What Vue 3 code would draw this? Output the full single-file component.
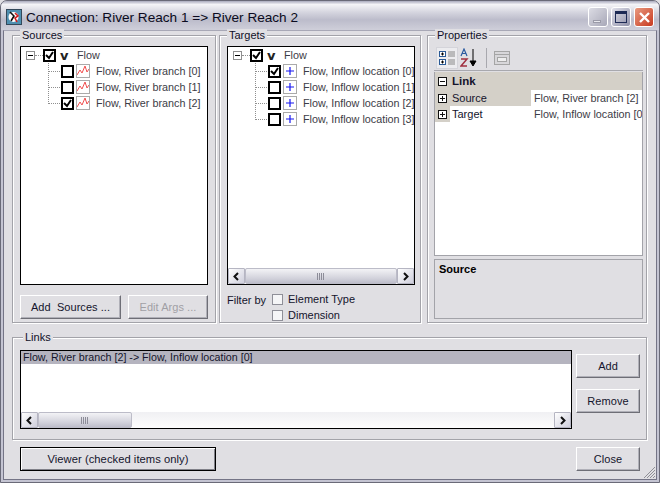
<script setup>
const sources = [
  { label: 'Flow, River branch [0]', checked: false },
  { label: 'Flow, River branch [1]', checked: false },
  { label: 'Flow, River branch [2]', checked: true }
]
const targets = [
  { label: 'Flow, Inflow location [0]', checked: true },
  { label: 'Flow, Inflow location [1]', checked: false },
  { label: 'Flow, Inflow location [2]', checked: false },
  { label: 'Flow, Inflow location [3]', checked: false }
]
</script>

<template>
  <div class="win">
    <div class="title">
      <svg class="appicon" width="16" height="16" viewBox="0 0 16 16">
        <rect x="0.5" y="0.5" width="15" height="15" fill="#4f8fb0" stroke="#33485a"/>
        <circle cx="7.500" cy="8" r="5" fill="#fff"/>
        <path d="M4 3l4 4-3 5" stroke="#111" stroke-width="1.600" fill="none"/>
        <path d="M9 4l3 3-3 2 2 4" stroke="#d02020" stroke-width="1.600" fill="none"/>
      </svg>
      <span class="title-text">Connection: River Reach 1 =&gt; River Reach 2</span>
      <div class="wbtns">
        <div class="wb min"><i></i></div>
        <div class="wb max"><i></i></div>
        <div class="wb close">
          <svg width="13" height="13" viewBox="0 0 13 13"><path d="M2 2l9 9M11 2l-9 9" stroke="#fff" stroke-width="2.400"/></svg>
        </div>
      </div>
    </div>

    <div class="client">
      <div class="top">
        <section class="group g-src">
          <span class="legend">Sources</span>
          <div class="tree src-tree">
            <div class="row root">
              <span class="exp"><i></i></span><span class="dots"></span>
              <span class="chk on"><svg width="9" height="9" viewBox="0 0 9 9"><path d="M1 4l3 3 4-6" fill="none" stroke="#000" stroke-width="2"/></svg></span>
              <b class="vee">v</b><span class="lab">Flow</span>
            </div>
            <div class="kids">
              <div v-for="s in sources" :key="s.label" class="row kid">
                <span class="chk"><svg v-if="s.checked" width="9" height="9" viewBox="0 0 9 9"><path d="M1 4l3 3 4-6" fill="none" stroke="#000" stroke-width="2"/></svg></span>
                <span class="ico"><svg width="12" height="12" viewBox="0 0 12 12"><path d="M0 10l3-5 2 3 3-7 2 6 2-3" fill="none" stroke="#f05050"/></svg></span>
                <span class="lab">{{ s.label }}</span>
              </div>
            </div>
          </div>
          <div class="src-btns">
            <button class="btn add-src">Add&nbsp; Sources ...</button>
            <button class="btn edit" disabled>Edit Args ...</button>
          </div>
        </section>

        <section class="group g-tgt">
          <span class="legend">Targets</span>
          <div class="tree tgt-tree">
            <div class="tree-body">
              <div class="row root">
                <span class="exp"><i></i></span><span class="dots"></span>
                <span class="chk on"><svg width="9" height="9" viewBox="0 0 9 9"><path d="M1 4l3 3 4-6" fill="none" stroke="#000" stroke-width="2"/></svg></span>
                <b class="vee">v</b><span class="lab">Flow</span>
              </div>
              <div class="kids">
                <div v-for="t in targets" :key="t.label" class="row kid">
                  <span class="chk"><svg v-if="t.checked" width="9" height="9" viewBox="0 0 9 9"><path d="M1 4l3 3 4-6" fill="none" stroke="#000" stroke-width="2"/></svg></span>
                  <span class="ico"><svg width="12" height="12" viewBox="0 0 12 12"><path d="M6 2v8M2 6h8" stroke="#1515f0" stroke-width="1.200"/></svg></span>
                  <span class="lab">{{ t.label }}</span>
                </div>
              </div>
            </div>
            <div class="hscroll">
              <span class="sb-btn"><svg width="9" height="9" viewBox="0 0 9 9"><path d="M6 1L2.500 4.500 6 8" fill="none" stroke="#111" stroke-width="2"/></svg></span>
              <span class="thumb full"><em></em></span>
              <span class="sb-btn"><svg width="9" height="9" viewBox="0 0 9 9"><path d="M3 1l3.500 3.500L3 8" fill="none" stroke="#111" stroke-width="2"/></svg></span>
            </div>
          </div>
          <div class="filter">
            <span class="f-lab">Filter by</span>
            <div class="f-opts">
              <label class="f-opt"><span class="box"></span>Element Type</label>
              <label class="f-opt"><span class="box"></span>Dimension</label>
            </div>
          </div>
        </section>

        <section class="group g-prop">
          <span class="legend">Properties</span>
          <div class="toolbar">
            <span class="tb active">
              <svg width="18" height="18" viewBox="0 0 18 18">
                <rect x="1.500" y="2.500" width="6" height="5" fill="#fff" stroke="#2a5a96"/>
                <rect x="1.500" y="10.500" width="6" height="5" fill="#fff" stroke="#2a5a96"/>
                <path d="M3 5h3M4.500 3.500v3M3 13h3M4.500 11.500v3" stroke="#000"/>
                <path d="M10 3h7M10 5h7M10 7h7M10 11h7M10 13h7M10 15h7" stroke="#888"/>
              </svg>
            </span>
            <span class="tb az">
              <svg width="18" height="20" viewBox="0 0 18 20">
                <path d="M1 8l3-7 3 7M2.500 5.500h3" fill="none" stroke="#2a5aa0" stroke-width="1.200"/>
                <path d="M1 11h6L1 18h6" fill="none" stroke="#a03040" stroke-width="1.500"/>
                <path d="M13 1v15M10 13l3 5 3-5z" stroke="#000" fill="#000"/>
              </svg>
            </span>
            <span class="sep"></span>
            <span class="tb dis">
              <svg width="16" height="14" viewBox="0 0 16 14">
                <rect x="0.500" y="0.500" width="15" height="13" fill="#d8d7da" stroke="#a5a5a5"/>
                <path d="M0.500 3.500h15" stroke="#a5a5a5"/>
                <rect x="3.500" y="6.500" width="9" height="4" fill="#eee" stroke="#a5a5a5"/>
              </svg>
            </span>
          </div>
          <div class="grid">
            <div class="g-row cat"><span class="gexp"><i></i></span><b>Link</b></div>
            <div class="g-row sel">
              <span class="gexp plus"><i></i></span>
              <span class="gname">Source</span>
              <span class="gval">Flow, River branch [2]</span>
            </div>
            <div class="g-row">
              <span class="gexp plus"><i></i></span>
              <span class="gname">Target</span>
              <span class="gval">Flow, Inflow location [0]</span>
            </div>
          </div>
          <div class="help"><b>Source</b></div>
        </section>
      </div>

      <section class="group g-links">
        <span class="legend">Links</span>
        <div class="links-in">
          <div class="list">
            <div class="list-body"><div class="list-sel">Flow, River branch [2] -&gt; Flow, Inflow location [0]</div></div>
            <div class="hscroll">
              <span class="sb-btn"><svg width="9" height="9" viewBox="0 0 9 9"><path d="M6 1L2.500 4.500 6 8" fill="none" stroke="#111" stroke-width="2"/></svg></span>
              <span class="thumb short"><em></em></span>
              <span class="track"></span>
              <span class="sb-btn"><svg width="9" height="9" viewBox="0 0 9 9"><path d="M3 1l3.500 3.500L3 8" fill="none" stroke="#111" stroke-width="2"/></svg></span>
            </div>
          </div>
          <div class="link-btns">
            <button class="btn side">Add</button>
            <button class="btn side">Remove</button>
          </div>
        </div>
      </section>

      <div class="bottom">
        <button class="btn viewer">Viewer (checked items only)</button>
        <button class="btn side">Close</button>
      </div>
      <svg class="grip" width="13" height="13" viewBox="0 0 13 13"><path d="M12 1L1 12M12 4l-8 8M12 7l-5 5M12 10l-2 2" stroke="#8f8f96"/></svg>
    </div>
  </div>
</template>

<style>
html, body { margin: 0; background: #e0dfe3; }
</style>

<style scoped>
* { box-sizing: border-box; }
.win {
  width: 660px; height: 483px; overflow: hidden; position: relative;
  font: 11px/13px "Liberation Sans", Arial, sans-serif; color: #000;
  background: #c4c4d2;
  border: 1px solid #6a6a78; border-radius: 7px 7px 0 0;
  display: flex; flex-direction: column;
  padding: 0 1px 1px;
}
.title {
  height: 29px; flex: none; display: flex; align-items: center; padding: 3px 5px 0 5px;
  margin: 0 -1px;
  background: linear-gradient(#a9aabd 0, #f4f4f7 12%, #d4d4de 40%, #bcbccb 65%, #cfcfda 100%);
}
.appicon { flex: none; }
.title-text { margin-left: 4px; font-size: 13.6px; color: #0b0b20; white-space: nowrap; }
.wbtns { margin-left: auto; display: flex; gap: 3px; }
.wb { width: 20px; height: 20px; border: 1px solid #fff; border-radius: 3px; display: flex; align-items: center; justify-content: center; position: relative; }
.min { background: linear-gradient(135deg, #dcdce4, #a8a8b8); }
.min i { position: absolute; left: 4px; bottom: 3px; width: 8px; height: 3px; background: #e8e8ee; border: 1px solid #9a9aa8; }
.max { background: linear-gradient(135deg, #e0e0ea, #8f90a8); }
.max i { width: 12px; height: 12px; border: 1px solid #1d2a55; border-top-width: 3px; }
.close { background: linear-gradient(135deg, #e89a80, #c8391f); }
.client {
  flex: 1; padding: 4px 8px 8px 8px; display: flex; flex-direction: column; position: relative;
  background: #e0dfe3;
  margin: 0 1px 1px;
  border: 1px solid #747486; border-top: 1px solid #a8a8b6;
}
.top { display: flex; height: 288px; flex: none; }
.group { position: relative; border: 1px solid #a3a3a9; box-shadow: 1px 1px 0 #fff, inset 1px 1px 0 #fff; flex: none; }
.legend { position: absolute; top: -7px; left: 7px; padding: 0 2px; background: #e0dfe3; color: #101028; }
.g-src { width: 204px; padding: 10px 7px 0; margin-right: 3px; }
.g-tgt { width: 202px; padding: 10px 6px 0 7px; margin-right: 6px; }
.g-prop { width: 220px; padding: 10px 3px 0 6px; }
.tree { width: 188px; height: 239px; background: #fff; border: 1px solid #000; position: relative; overflow: hidden; font-size: 10.8px; }
.tgt-tree { display: flex; flex-direction: column; }
.tree-body { flex: 1; overflow: hidden; }
.row { display: flex; align-items: center; height: 16px; white-space: nowrap; }
.root { padding-left: 5px; }
.exp { width: 9px; height: 9px; border: 1px solid #8f8f8f; position: relative; flex: none; background: #fff; }
.exp i { position: absolute; left: 1px; top: 3px; width: 5px; height: 1px; background: #000; }
.dots { width: 8px; border-top: 1px dotted #8f8f8f; flex: none; }
.chk { width: 13px; height: 13px; border: 2px solid #000; background: #fff; display: flex; align-items: center; justify-content: center; flex: none; }
.vee { margin-left: 4px; width: 17px; font: bold 13px/13px "DejaVu Sans", sans-serif; color: #222; }
.lab { color: #3c3c46; }
.kids { margin-left: 27px; border-left: 1px dotted #8f8f8f; height: 41px; }
.tgt-tree .kids { height: 57px; }
.kid { position: relative; padding-left: 12px; }
.kid::before { content: ""; position: absolute; left: 0; top: 8px; width: 11px; border-top: 1px dotted #8f8f8f; }
.ico { width: 14px; height: 14px; margin-left: 2px; border: 1px solid #aaa; display: flex; align-items: center; justify-content: center; flex: none; margin-right: 6px; background: #fff; }
.src-btns { display: flex; gap: 7px; margin-top: 10px; }
.btn {
  font: 11px/13px "Liberation Sans", Arial, sans-serif; letter-spacing: .05px; color: #14142c; background: #e0dfe3; height: 24px; padding: 0;
  border: 1px solid; border-color: #fff #6e6e76 #6e6e76 #fff; box-shadow: inset -1px -1px 0 #b0b0b8;
}
.add-src { width: 101px; }
.edit { width: 80px; color: #a0a0a5; }
.hscroll { height: 16px; display: flex; background: linear-gradient(#f0f0f3, #fdfdfd); flex: none; }
.sb-btn { width: 17px; height: 16px; flex: none; display: flex; align-items: center; justify-content: center; border: 1px solid #b5b5c2; border-radius: 1px; background: linear-gradient(135deg, #fff, #cfcfdc); }
.thumb { display: flex; align-items: center; justify-content: center; border: 1px solid #bcbcc8; border-radius: 2px; background: linear-gradient(#f3f3f6, #d0d0da 70%, #bdbdca); }
.thumb em { width: 8px; height: 7px; background: repeating-linear-gradient(90deg, #8c8c98 0 1px, transparent 1px 2px); }
.full { flex: 1; }
.short { width: 94px; }
.track { flex: 1; }
.filter { display: flex; margin-top: 6px; }
.f-lab { width: 45px; padding-top: 3px; color: #14142c; }
.f-opt { display: flex; align-items: center; height: 16px; color: #14142c; }
.box { width: 11px; height: 11px; background: #f5f5f7; border: 1px solid #8f8f98; margin-right: 5px; }
.toolbar { display: flex; align-items: center; height: 25px; padding-left: 2px; border-bottom: 1px solid #a8a8ae; margin-bottom: 1px; }
.tb { display: flex; align-items: center; justify-content: center; width: 22px; height: 22px; }
.active { background: #ececef; box-shadow: inset 0 0 0 1px #d4d4da; }
.sep { width: 1px; height: 20px; background: #a8a8ae; margin: 0 4px 0 6px; }
.grid { width: 209px; height: 184px; background: #fff; border: 1px solid #a3a3a9; border-top: 0; overflow: hidden; color: #14142c; }
.g-row { height: 16px; display: flex; align-items: center; white-space: nowrap; }
.gexp { width: 15px; height: 100%; display: flex; align-items: center; justify-content: center; background: #d4d0c8; flex: none; }
.gexp i { width: 9px; height: 9px; border: 1px solid #111; background: linear-gradient(#111,#111) center/5px 1px no-repeat, #fff; }
.plus i { background: linear-gradient(#111,#111) center/5px 1px no-repeat, linear-gradient(#111,#111) center/1px 5px no-repeat, #fff; }
.cat { height: 18px; background: #d4d0c8; font-weight: bold; }
.cat b { padding-left: 2px; font-size: 11.5px; }
.gname { width: 81px; height: 100%; padding-left: 2px; display: flex; align-items: center; flex: none; }
.sel .gname { background: #d4d0c8; }
.gval { padding-left: 3px; flex: 1; height: 100%; display: flex; align-items: center; overflow: hidden; color: #3c3c46; font-size: 10.8px; }
.help { width: 209px; height: 60px; margin-top: 3px; border: 1px solid #a3a3a9; padding: 3px 4px; }
.g-links { margin-top: 14px; height: 103px; width: 635px; padding: 12px 7px 0; }
.g-links .legend { left: 10px; }
.links-in { display: flex; }
.list { width: 552px; height: 79px; background: #fff; border: 1px solid #000; display: flex; flex-direction: column; flex: none; font-size: 10.7px; }
.list-body { flex: 1; }
.list-sel { height: 13px; line-height: 13px; background: #b5b4bf; padding-left: 2px; color: #14142c; }
.link-btns { display: flex; flex-direction: column; gap: 11px; margin-left: 4px; margin-top: 4px; flex: none; }
.side { width: 64px; }
.bottom { display: flex; justify-content: space-between; margin-top: 7px; padding: 0 7px 0 8px; width: 635px; flex: none; }
.viewer { width: 196px; border: 1px solid #000; box-shadow: inset 1px 1px 0 #fff, inset -1px -1px 0 #808088; font-size: 11.2px; }
.grip { position: absolute; right: 0; bottom: 0; }
</style>
